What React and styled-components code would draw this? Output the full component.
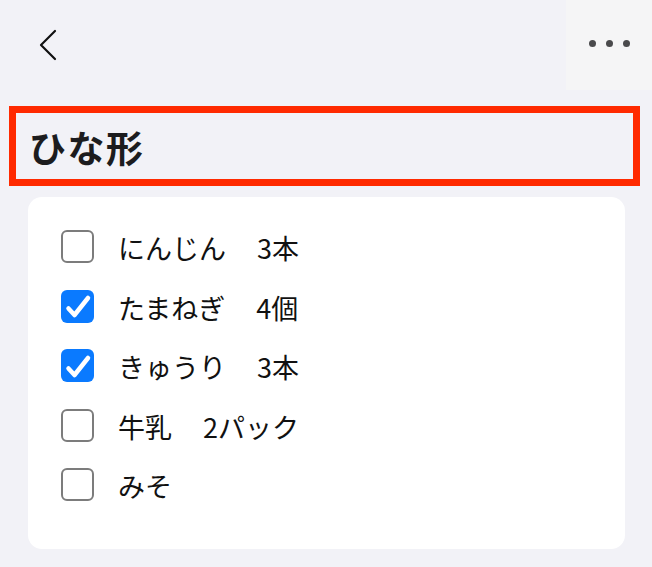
import React from "react";
import styled, { createGlobalStyle } from "styled-components";

const Global = createGlobalStyle`
  html, body { margin: 0; padding: 0; background: #f2f2f7; }
  body { font-family: "Noto Sans CJK JP", "Noto Sans", sans-serif; color: #111; }
`;

const Page = styled.div`
  width: 652px;
  height: 567px;
  background: #f2f2f7;
  display: flex;
  flex-direction: column;
  overflow: hidden;
`;

const Header = styled.div`
  height: 90px;
  display: flex;
  align-items: stretch;
  justify-content: space-between;
`;

const BackButton = styled.button`
  border: 0;
  background: transparent;
  padding: 0 0 0 38px;
  display: flex;
  align-items: center;
  cursor: pointer;
`;

const MoreButton = styled.button`
  width: 86px;
  border: 0;
  background: #f5f5f6;
  display: flex;
  align-items: center;
  justify-content: center;
  gap: 10px;
  padding: 0 0 4px 0;
  cursor: pointer;
`;

const Dot = styled.span`
  width: 7px;
  height: 7px;
  border-radius: 50%;
  background: #4a4a4c;
`;

const TitleBox = styled.div`
  margin: 16px 12px 0 9px;
  height: 80px;
  box-sizing: border-box;
  border: 7px solid #ff2a00;
  display: flex;
  align-items: center;
  padding-left: 13px;
`;

const Title = styled.h1`
  margin: 0;
  font-size: 37px;
  font-weight: 700;
  color: #1c1c1e;
  letter-spacing: 1.5px;
  padding-top: 2px;
`;

const Card = styled.ul`
  list-style: none;
  margin: 11px 27px 0 28px;
  padding: 20px 0 34px 33px;
  background: #fff;
  border-radius: 14px;
`;

const Row = styled.li`
  height: 59.5px;
  display: flex;
  align-items: center;
  gap: 24px;
`;

const Box = styled.span`
  width: 33px;
  height: 33px;
  box-sizing: border-box;
  border-radius: 6px;
  flex: none;
  display: flex;
  align-items: center;
  justify-content: center;
  background: ${(p) => (p.$checked ? "#0a7aff" : "#fff")};
  border: ${(p) => (p.$checked ? "none" : "2.5px solid #7c7c7c")};
`;

const Label = styled.span`
  font-size: 27px;
  color: #111;
  line-height: 1;
  padding-top: 2px;
`;

const Qty = styled.span`
  margin-left: 4px;
`;

const items = [
  { name: "にんじん", qty: "3本", checked: false },
  { name: "たまねぎ", qty: "4個", checked: true },
  { name: "きゅうり", qty: "3本", checked: true },
  { name: "牛乳", qty: "2パック", checked: false },
  { name: "みそ", qty: "", checked: false },
];

export default function App() {
  return (
    <Page>
      <Global />
      <Header>
        <BackButton aria-label="戻る">
          <svg width="20" height="32" viewBox="0 0 20 32">
            <path d="M17 2 L3 16 L17 30" fill="none" stroke="#111" strokeWidth="2.2" strokeLinecap="round" strokeLinejoin="round" />
          </svg>
        </BackButton>
        <MoreButton aria-label="その他">
          <Dot />
          <Dot />
          <Dot />
        </MoreButton>
      </Header>
      <TitleBox>
        <Title>ひな形</Title>
      </TitleBox>
      <Card>
        {items.map((it) => (
          <Row key={it.name}>
            <Box $checked={it.checked}>
              {it.checked && (
                <svg width="32" height="32" viewBox="0 0 32 32">
                  <path d="M6.5 18.5 L12.5 25 L26 8" fill="none" stroke="#fff" strokeWidth="4.5" strokeLinecap="round" strokeLinejoin="round" />
                </svg>
              )}
            </Box>
            <Label>
              {it.name}
              {it.qty && <Qty>　{it.qty}</Qty>}
            </Label>
          </Row>
        ))}
      </Card>
    </Page>
  );
}
